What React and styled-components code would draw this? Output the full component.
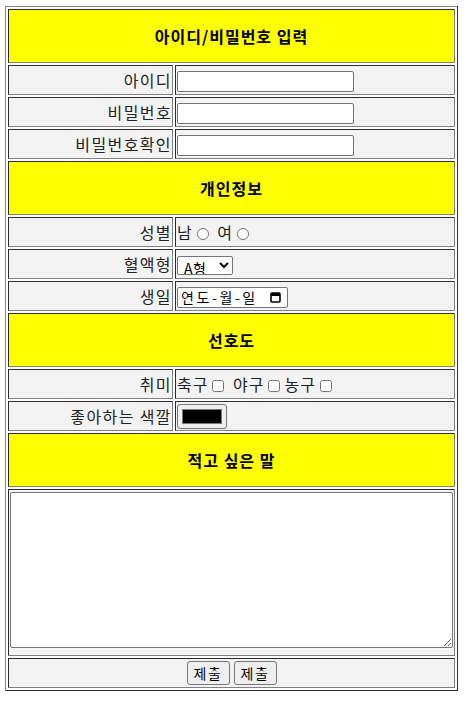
import styled, { createGlobalStyle } from "styled-components";

const GlobalStyle = createGlobalStyle`
    body {
        margin: 6px 0 0 5px;
        background: #fff;
        font-family: "Noto Sans CJK KR", "Noto Sans", sans-serif;
        color: #000;
    }
`;

const FormTable = styled.table`
    width: 453px;
    border: 1px outset grey;
    border-spacing: 2px;
    table-layout: fixed;
    font-size: 16px;
`;

const Column = styled.col`
    width: ${(p) => p.$w}px;
`;

const TitleCell = styled.th`
    height: 50px;
    padding: 1px;
    border: 1px inset grey;
    background: #ffff00;
    font-weight: bold;
    letter-spacing: 1px;
    text-align: center;
    vertical-align: middle;
`;

const LabelCell = styled.td`
    height: 26px;
    padding: 1px 0 1px 1px;
    border: 1px inset grey;
    background: #f3f3f3;
    text-align: right;
    vertical-align: middle;
    line-height: 20px;
    letter-spacing: 1.4px;
    color: #222;
    white-space: nowrap;
`;

const FieldCell = styled.td`
    height: ${(p) => p.$h || 26}px;
    padding: 1px;
    border: 1px inset grey;
    background: #f3f3f3;
    text-align: ${(p) => (p.$center ? "center" : "left")};
    vertical-align: middle;
    line-height: 20px;
    letter-spacing: 1px;
    color: #222;
    white-space: nowrap;
`;

const TextBox = styled.input`
    box-sizing: border-box;
    width: 177px;
    height: 21px;
    margin: 0;
    vertical-align: middle;
    border: 1px solid #767676;
    border-radius: 2px;
    background: #fff;
`;

const Choice = styled.input`
    width: 12px;
    height: 12px;
    margin: 0 4px 0 4px;
    vertical-align: -1px;
`;

const BloodSelect = styled.select`
    box-sizing: border-box;
    width: 56px;
    height: 19px;
    margin: 0;
    padding: 0 0 0 2px;
    font: 14px "Noto Sans CJK KR", sans-serif;
    line-height: 17px;
    letter-spacing: 0.5px;
    vertical-align: middle;
    border: 1px solid #767676;
    border-radius: 2px;
    background: #fff;
    color: #000;
`;

const DateField = styled.span`
    box-sizing: border-box;
    display: inline-flex;
    align-items: center;
    justify-content: space-between;
    width: 111px;
    height: 21px;
    padding: 0 6px 0 3px;
    font-size: 14px;
    letter-spacing: 2.6px;
    vertical-align: middle;
    border: 1px solid #767676;
    border-radius: 2px;
    background: #fff;
    color: #000;
`;

const ColorBox = styled.input`
    box-sizing: border-box;
    width: 50px;
    height: 25px;
    margin: 0;
    padding: 0;
    vertical-align: middle;
    border: 1px solid #767676;
    border-radius: 3px;
    background: #efefef;

    &::-webkit-color-swatch-wrapper {
        padding: 4px 4px;
    }

    &::-webkit-color-swatch {
        border: 1px solid #777;
        border-radius: 0;
    }
`;

const Memo = styled.textarea`
    box-sizing: border-box;
    display: block;
    width: 443px;
    height: 156px;
    margin: 1px 0 6px;
    border: 1px solid #767676;
    border-radius: 2px;
    resize: both;
`;

const SubmitButton = styled.button`
    box-sizing: border-box;
    width: 43px;
    height: 24px;
    margin: 0 2px;
    padding: 0;
    font: 14px "Noto Sans CJK KR", sans-serif;
    letter-spacing: 1.5px;
    color: #000;
    background: #efefef;
    border: 1px solid #767676;
    border-radius: 3px;
    vertical-align: middle;
`;

function CalendarIcon() {
    return (
        <svg width="11" height="12" viewBox="0 0 11 12" aria-hidden="true">
            <rect x="1" y="2" width="9" height="9" rx="1" fill="none" stroke="#000" strokeWidth="1.6" />
            <rect x="1" y="2" width="9" height="3" fill="#000" />
        </svg>
    );
}

function App() {
    return (
        <>
            <GlobalStyle />
            <form onSubmit={(e) => e.preventDefault()}>
                <FormTable>
                    <colgroup>
                        <Column $w={165} />
                        <Column $w={280} />
                    </colgroup>
                    <tbody>
                        <tr>
                            <TitleCell colSpan={2}>아이디/비밀번호 입력</TitleCell>
                        </tr>
                        <tr>
                            <LabelCell>아이디</LabelCell>
                            <FieldCell><TextBox type="text" /></FieldCell>
                        </tr>
                        <tr>
                            <LabelCell>비밀번호</LabelCell>
                            <FieldCell><TextBox type="password" /></FieldCell>
                        </tr>
                        <tr>
                            <LabelCell>비밀번호확인</LabelCell>
                            <FieldCell><TextBox type="password" /></FieldCell>
                        </tr>

                        <tr>
                            <TitleCell colSpan={2}>개인정보</TitleCell>
                        </tr>
                        <tr>
                            <LabelCell>성별</LabelCell>
                            <FieldCell>
                                남<Choice type="radio" name="gender" /> 여<Choice type="radio" name="gender" />
                            </FieldCell>
                        </tr>
                        <tr>
                            <LabelCell>혈액형</LabelCell>
                            <FieldCell>
                                <BloodSelect defaultValue="A">
                                    <option value="A">A형</option>
                                    <option value="B">B형</option>
                                    <option value="O">O형</option>
                                    <option value="AB">AB형</option>
                                </BloodSelect>
                            </FieldCell>
                        </tr>
                        <tr>
                            <LabelCell>생일</LabelCell>
                            <FieldCell>
                                <DateField>
                                    연도-월-일
                                    <CalendarIcon />
                                </DateField>
                            </FieldCell>
                        </tr>

                        <tr>
                            <TitleCell colSpan={2}>선호도</TitleCell>
                        </tr>
                        <tr>
                            <LabelCell>취미</LabelCell>
                            <FieldCell>
                                축구<Choice type="checkbox" /> 야구<Choice type="checkbox" />농구<Choice type="checkbox" />
                            </FieldCell>
                        </tr>
                        <tr>
                            <LabelCell>좋아하는 색깔</LabelCell>
                            <FieldCell><ColorBox type="color" defaultValue="#000000" /></FieldCell>
                        </tr>

                        <tr>
                            <TitleCell colSpan={2}>적고 싶은 말</TitleCell>
                        </tr>
                        <tr>
                            <FieldCell colSpan={2} $h={160}><Memo /></FieldCell>
                        </tr>
                        <tr>
                            <FieldCell colSpan={2} $center>
                                <SubmitButton type="submit">제출</SubmitButton>
                                <SubmitButton type="button">제출</SubmitButton>
                            </FieldCell>
                        </tr>
                    </tbody>
                </FormTable>
            </form>
        </>
    );
}

export default App;
